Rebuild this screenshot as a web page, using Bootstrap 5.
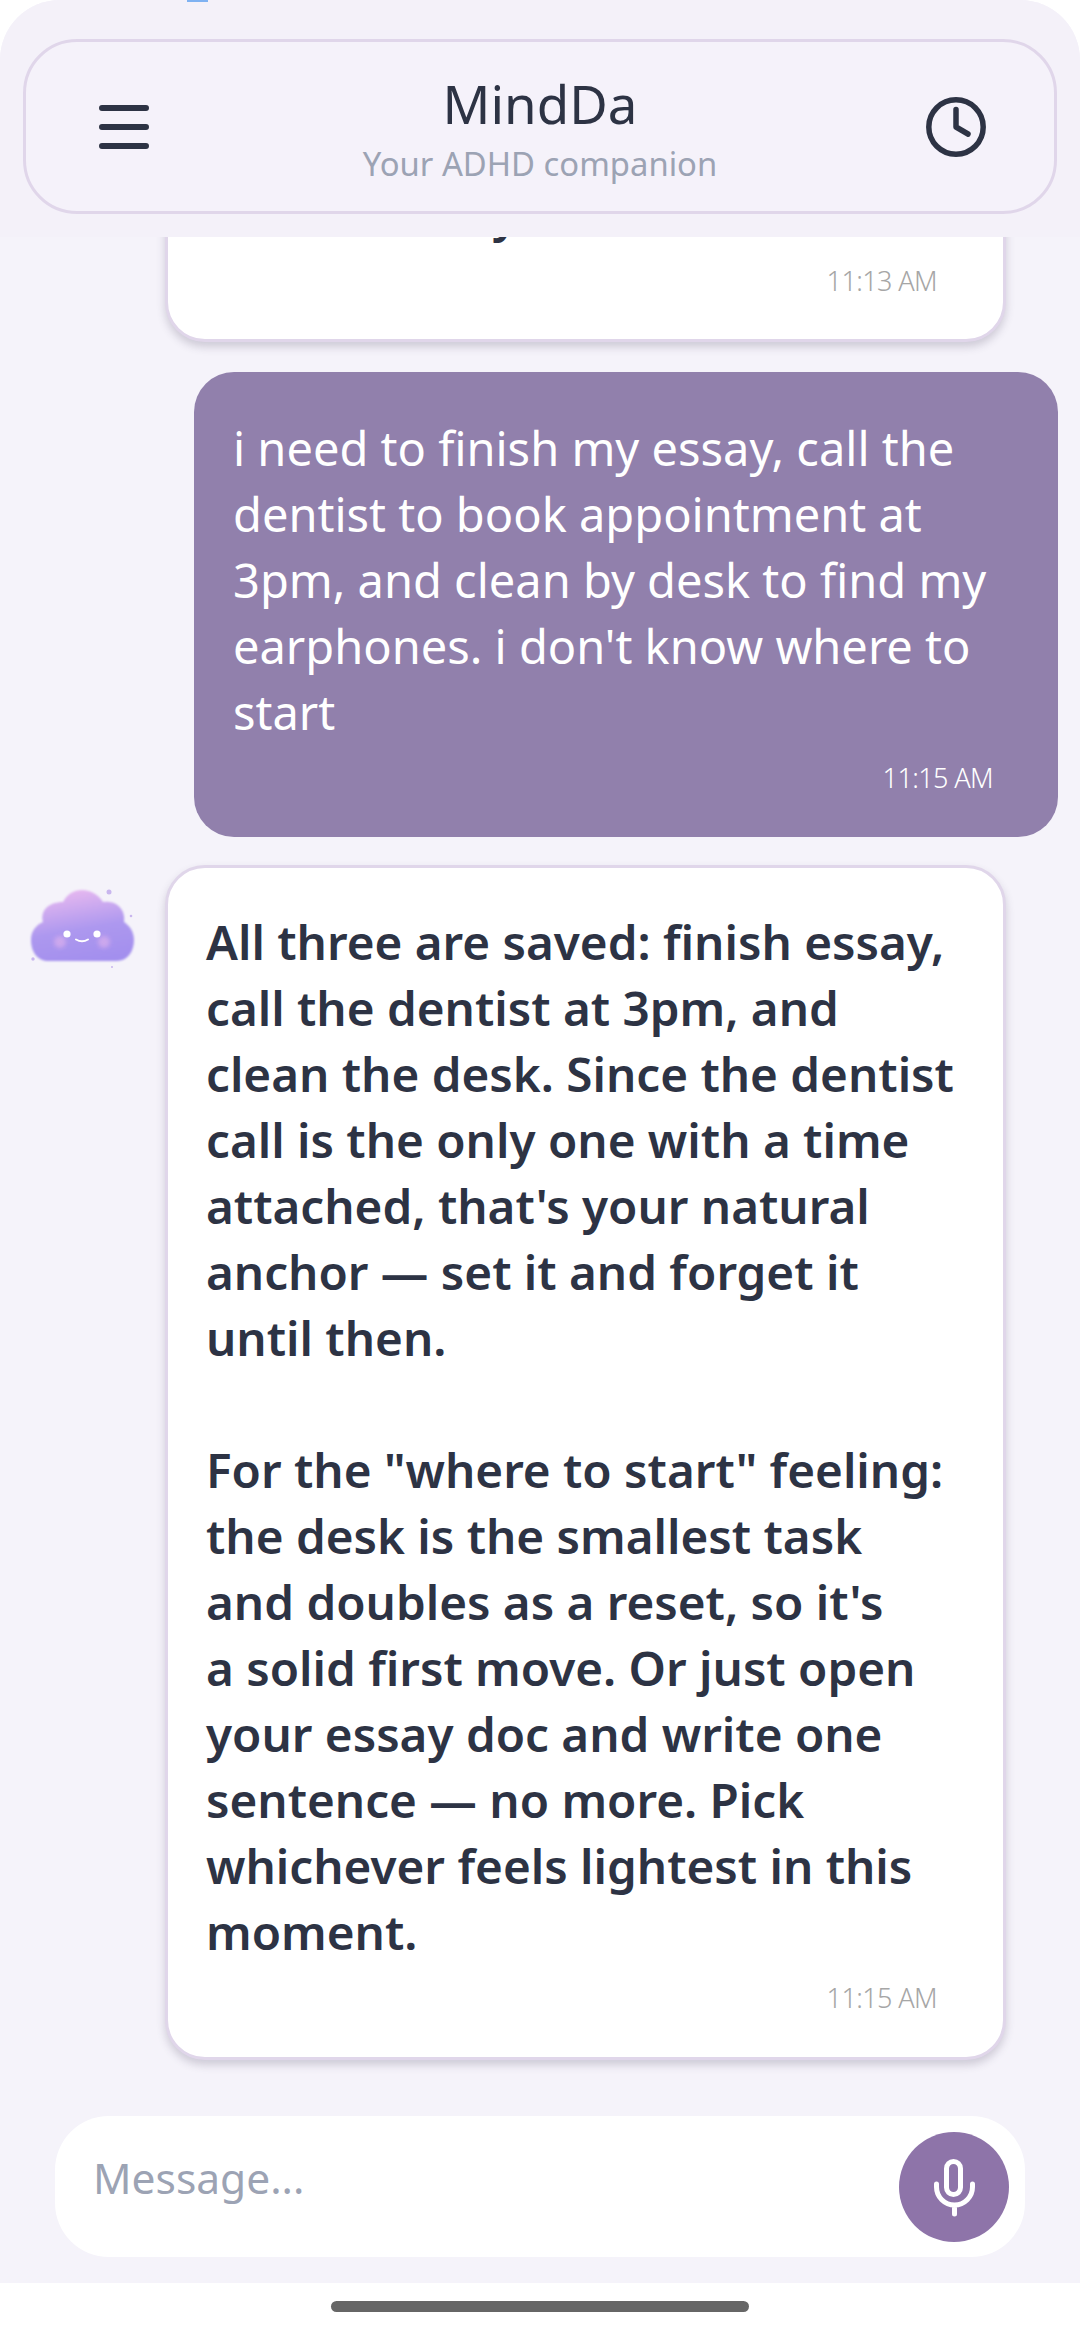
<!doctype html>
<html lang="en"><head><meta charset="utf-8">
<link href="https://cdn.jsdelivr.net/npm/bootstrap@5.3.0/dist/css/bootstrap.min.css" rel="stylesheet">
<style>
html,body{height:100%;margin:0;background:#fff}
body{font-family:"Noto Sans","Open Sans",sans-serif;overflow:hidden}
.app-shell{width:1080px;height:2283px;background:#f5f3fa;border-radius:60px 60px 0 0;overflow:hidden;position:relative}
.top-zone{height:237px;background:#f4f1f9;padding:39px 23px 23px;flex:none;position:relative;z-index:2}
.top-pill{height:175px;border:3px solid #e0d6ea;border-radius:54px;padding:0 68px 0 73px;background:#f5f2fa}
.slot-left{width:100px;flex:none}
.slot-right{width:105px;flex:none}
.brand-block{padding-top:5px}
.brand-name{font-size:52.8px;line-height:62px;color:#2d3344;font-weight:400}
.brand-sub{font-size:32.8px;line-height:44px;color:#9ca3b4;margin-top:7px}
.chat-zone{flex:1 1 0;min-height:0;overflow:hidden;gap:28px;padding-bottom:56px}
.bub-row{flex:none}
.first-row{margin-bottom:2px}
.bot-bubble{width:841px;margin-left:165px;background:#fff;border:3px solid #e0d6ea;border-radius:40px;padding:41px 20px 40px 38px;color:#2d3344;font-size:47.6px;line-height:66px;font-weight:600;box-shadow:0 5px 8px rgba(70,60,90,.22);white-space:nowrap}
.user-bubble{width:864px;margin-left:194px;background:#9180ac;border-radius:40px;color:#fff;font-size:47px;line-height:66px;padding:43px 65px 40px 39px;white-space:nowrap}
.stamp{font-size:27px;line-height:38px;text-align:right;font-weight:300;margin-top:14px;color:#a6a6a6;letter-spacing:-.6px}
.bot-bubble .stamp{margin-right:46px}
.first-row .stamp{margin-top:15px;margin-bottom:-1px}
.user-bubble .stamp{color:#fff}
.cloud-slot{position:absolute;left:24px;top:19px;line-height:0}
.input-zone{flex:none;padding:0 55px 26px}
.input-pill{height:141px;background:#fff;border-radius:54px;padding:0 16px 0 38px}
.msg-ph{font-size:42.5px;line-height:60px;color:#9ca3b4;margin-top:-17px}
.mic-btn{width:110px;height:110px;border-radius:50%;background:#8e74a9;border:0}
.home-zone{height:45px;background:#fff}
.home-bar{width:418px;height:11px;border-radius:6px;background:#666;margin-top:18px}
.blue-tick{position:absolute;left:187px;top:0;width:21px;height:2px;background:#7fb2f2;z-index:3}
</style></head>
<body>
<div class="app-shell d-flex flex-column">
  <div class="blue-tick"></div>
  <div class="top-zone">
    <div class="top-pill d-flex align-items-center">
      <div class="slot-left"><svg class="d-block" width="50" height="44" viewBox="0 0 50 44"><g stroke="#2d3344" stroke-width="6" stroke-linecap="round"><path d="M3 3h44M3 22h44M3 41h44"/></g></svg></div>
      <div class="brand-block text-center flex-grow-1">
        <div class="brand-name">MindDa</div>
        <div class="brand-sub">Your ADHD companion</div>
      </div>
      <div class="slot-right d-flex justify-content-end"><svg width="60" height="60" viewBox="0 0 60 60" fill="none" stroke="#2d3344" stroke-width="5.5" stroke-linecap="round" stroke-linejoin="round"><circle cx="30" cy="30" r="27.2"/><path d="M30 12.5V30l12 7"/></svg></div>
    </div>
  </div>
  <div class="chat-zone d-flex flex-column justify-content-end">
    <div class="bub-row first-row d-flex"><div class="bot-bubble">Done it today
      <div class="stamp">11:13 AM</div></div></div>
    <div class="bub-row d-flex"><div class="user-bubble">i need to finish my essay, call the<br>dentist to book appointment at<br>3pm, and clean by desk to find my<br>earphones. i don't know where to<br>start
      <div class="stamp">11:15 AM</div></div></div>
    <div class="bub-row d-flex position-relative">
      <div class="cloud-slot">
        <svg width="120" height="90" viewBox="0 0 120 90"><defs><linearGradient id="cg" x1="0.35" y1="0" x2="0.6" y2="1"><stop offset="0" stop-color="#e8b9f0"/><stop offset=".55" stop-color="#ad98ef"/><stop offset="1" stop-color="#a38fee"/></linearGradient><filter id="sf" x="-10%" y="-10%" width="120%" height="120%"><feGaussianBlur stdDeviation="1"/></filter><filter id="cf" x="-50%" y="-50%" width="200%" height="200%"><feGaussianBlur stdDeviation="2"/></filter></defs>
        <path filter="url(#sf)" fill="url(#cg)" d="M24 77C13 77 7 67 7 56C7 47 12 41 19 38C16 27 24 18 39 18C43 10 50 6 58 6C67 6 75 11 79 18C92 16 102 25 100 38C106 42 110 48 110 56C110 68 103 77 93 77Z"/>
        <circle cx="36" cy="58" r="6" fill="#dcb0ee" opacity=".7" filter="url(#cf)"/><circle cx="80" cy="58" r="6" fill="#dcb0ee" opacity=".7" filter="url(#cf)"/>
        <circle cx="43" cy="50" r="3.6" fill="#fff"/><circle cx="73" cy="50" r="3.6" fill="#fff"/><path d="M52 55.500q6 3.500 12 0" stroke="#fff" stroke-width="2" fill="none" stroke-linecap="round"/>
        <circle cx="85" cy="8" r="2.500" fill="#c9b6ee"/><circle cx="107" cy="32" r="1.300" fill="#c9b6ee"/><circle cx="9" cy="75" r="1.700" fill="#c9b6ee"/><circle cx="88" cy="83" r="1" fill="#c9b6ee"/></svg>
      </div>
      <div class="bot-bubble">All three are saved: finish essay,<br>call the dentist at 3pm, and<br>clean the desk. Since the dentist<br>call is the only one with a time<br>attached, that's your natural<br>anchor — set it and forget it<br>until then.<br><br>For the "where to start" feeling:<br>the desk is the smallest task<br>and doubles as a reset, so it's<br>a solid first move. Or just open<br>your essay doc and write one<br>sentence — no more. Pick<br>whichever feels lightest in this<br>moment.
      <div class="stamp">11:15 AM</div></div>
    </div>
  </div>
  <div class="input-zone">
    <div class="input-pill d-flex align-items-center justify-content-between">
      <span class="msg-ph">Message...</span>
      <button class="mic-btn d-flex align-items-center justify-content-center p-0" aria-label="Microphone">
        <svg width="48" height="60" viewBox="0 0 48 60" fill="none" stroke="#fff" stroke-width="5" stroke-linecap="round"><rect x="16.500" y="4.500" width="14" height="33" rx="7"/><path d="M6.500 27v3a18 18 0 0 0 36 0v-3M24.500 48v9"/></svg>
      </button>
    </div>
  </div>
</div>
<div class="home-zone d-flex justify-content-center"><div class="home-bar"></div></div>
<script src="https://cdn.jsdelivr.net/npm/bootstrap@5.3.0/dist/js/bootstrap.bundle.min.js"></script>
</body></html>
